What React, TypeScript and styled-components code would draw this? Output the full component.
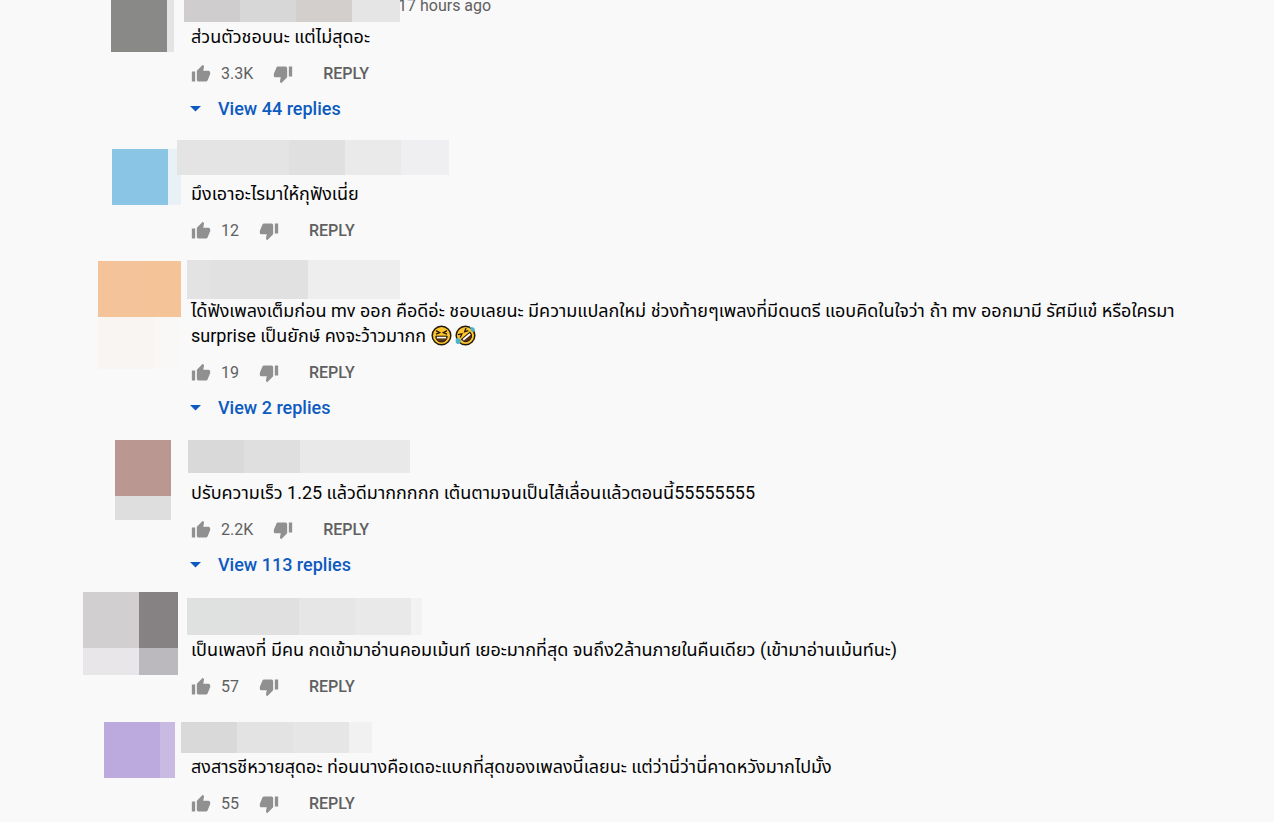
import React from "react";
import styled, { createGlobalStyle } from "styled-components";

const GlobalStyle = createGlobalStyle`
  * { box-sizing: border-box; }
  body {
    margin: 0;
    background: #f9f9f9;
    color: #030303;
    font-family: Roboto, "Leelawadee UI", "Noto Sans Thai", "Noto Sans", sans-serif;
  }
`;

const Viewport = styled.main`
  overflow: hidden;
  height: 100vh;
`;

/* The list is scrolled a little, so the first comment is cut at the top. */
const CommentList = styled.ul`
  margin: -22px 0 0;
  padding: 0;
  list-style: none;
`;

const Comment = styled.li`
  display: grid;
  grid-template-columns: 191px minmax(0, 1fr);
  align-items: start;
  padding-bottom: 9px;
`;

const AvatarCell = styled.div<{ $left: number; $top: number }>`
  height: 0;
  padding-left: ${(p) => p.$left}px;
  padding-top: ${(p) => p.$top}px;
`;

const Mosaic = styled.div<{ $cols: number[]; $rows: number[] }>`
  display: grid;
  grid-template-columns: ${(p) => p.$cols.map((c) => `${c}px`).join(" ")};
  grid-template-rows: ${(p) => p.$rows.map((r) => `${r}px`).join(" ")};
`;

const Tile = styled.span<{ $color: string }>`
  background: ${(p) => p.$color};
`;

const Body = styled.div`
  min-width: 0;
  padding-right: 60px;
`;

const Header = styled.div<{ $shift: number; $top: number }>`
  display: flex;
  align-items: flex-start;
  height: 46px;
  margin-left: -${(p) => p.$shift}px;
  padding-top: ${(p) => p.$top}px;
`;

const NameCover = styled.div`
  position: relative;
  z-index: 1;
`;

const Time = styled.a`
  margin: 18px 0 0 -2px;
  color: #606060;
  font-size: 16px;
  line-height: 20px;
  text-decoration: none;
`;

const Text = styled.p`
  margin: 0;
  font-size: 18px;
  line-height: 25px;
  white-space: pre-line;
`;

const Actions = styled.div`
  display: flex;
  align-items: center;
  height: 24px;
  margin-top: 13px;
  color: #606060;
  font-size: 16px;
  line-height: 24px;
`;

const IconButton = styled.button`
  display: flex;
  padding: 0;
  border: 0;
  background: none;
  color: #909090;
  cursor: pointer;
`;

const Count = styled.span`
  margin: 0 20px 0 10px;
`;

const ReplyButton = styled.button`
  margin-left: 30px;
  padding: 0;
  border: 0;
  background: none;
  color: #606060;
  font: 500 16px/24px Roboto, sans-serif;
  cursor: pointer;
`;

const RepliesButton = styled.button`
  display: flex;
  align-items: center;
  gap: 16px;
  height: 24px;
  margin: 11px 0 5px -1px;
  padding: 0;
  border: 0;
  background: none;
  color: #0d5bc0;
  font: 500 18px/24px Roboto, sans-serif;
  cursor: pointer;
`;

const EmojiSvg = styled.svg`
  width: 21px;
  height: 21px;
  margin-right: 3px;
  vertical-align: -4px;
`;

const ThumbUp = () => (
  <svg width="20" height="20" viewBox="0 0 24 24" fill="currentColor" aria-hidden="true">
    <path d="M1 21h4V9H1v12zm22-11c0-1.1-.9-2-2-2h-6.31l.95-4.57.03-.32c0-.41-.17-.79-.44-1.06L14.17 1 7.59 7.59C7.22 7.95 7 8.45 7 9v10c0 1.1.9 2 2 2h9c.83 0 1.54-.5 1.84-1.22l3.02-7.05c.09-.23.14-.47.14-.73v-2z" />
  </svg>
);

const ThumbDown = () => (
  <svg width="20" height="20" viewBox="0 0 24 24" fill="currentColor" aria-hidden="true">
    <path d="M15 3H6c-.83 0-1.54.5-1.84 1.22l-3.02 7.05c-.09.23-.14.47-.14.73v2c0 1.1.9 2 2 2h6.31l-.95 4.57-.03.32c0 .41.17.79.44 1.06L9.83 23l6.59-6.59c.36-.36.58-.86.58-1.41V5c0-1.1-.9-2-2-2zm4 0v12h4V3h-4z" />
  </svg>
);

const Caret = () => (
  <svg width="12" height="6" viewBox="0 0 12 6" fill="currentColor" aria-hidden="true">
    <path d="M0 0h11L5.500 5.500z" />
  </svg>
);

const Laughing = () => (
  <EmojiSvg viewBox="0 0 21 21" role="img" aria-label="laughing">
    <circle cx="10.5" cy="10.5" r="9.3" fill="#fdc62f" stroke="#24190c" strokeWidth="1.5" />
    <path d="M5 5.6l3.7 2L5 9.2M16 5.6l-3.7 2L16 9.2" fill="none" stroke="#24190c" strokeWidth="1.3" />
    <path d="M4.8 11.2h11.4c0 3.6-2.4 5.8-5.7 5.8s-5.7-2.2-5.7-5.8z" fill="#5a3216" stroke="#24190c" strokeWidth="1" />
    <path d="M5.9 11.8h9.2v1.6H5.9z" fill="#fff" />
  </EmojiSvg>
);

const Rolling = () => (
  <EmojiSvg viewBox="0 0 21 21" role="img" aria-label="rolling on the floor laughing">
    <circle cx="10.5" cy="10.5" r="9.3" fill="#fdc62f" stroke="#24190c" strokeWidth="1.5" />
    <g transform="rotate(-40 10.5 10.5)">
      <path d="M5.2 5l3.5 2-3.5 1.6M15.8 5l-3.5 2 3.5 1.6" fill="none" stroke="#24190c" strokeWidth="1.3" />
      <path d="M5 10.8h11c0 3.6-2.2 5.8-5.5 5.8S5 14.4 5 10.8z" fill="#5a3216" stroke="#24190c" strokeWidth="1" />
      <path d="M6 11.4h9v1.8H6z" fill="#fff" />
    </g>
    <path d="M1 13.5c2.8-.6 4.6.2 4.8 2.2.2 2.2-1.6 3.6-3.3 3.2C.6 18.4.2 16 1 13.5zM14.5 2c2.600-.4 4.800.4 5.300 2 .5 1.800-.6 3-2.100 2.800-1.900-.2-1.600-3.200-3.200-4.800z" fill="#4fb3c8" />
  </EmojiSvg>
);

interface Cover {
  offset: number;
  top: number;
  cols: number[];
  rows: number[];
  colors: string[];
}

interface CommentData {
  avatar: Cover;
  name: Cover;
  time?: string;
  text: React.ReactNode;
  likes: string;
  replies?: number;
}

const comments: CommentData[] = [
  {
    avatar: { offset: 111, top: 0, cols: [56, 7], rows: [74], colors: ["#898987", "#e4e4e4"] },
    name: { offset: 7, top: 0, cols: [56, 56, 56, 48], rows: [44], colors: ["#d0cdce", "#d7d7d7", "#d2cfcd", "#e5e5e5"] },
    time: "17 hours ago",
    text: "ส่วนตัวชอบนะ แต่ไม่สุดอะ",
    likes: "3.3K",
    replies: 44,
  },
  {
    avatar: { offset: 112, top: 14, cols: [56, 13], rows: [56], colors: ["#8ac5e6", "#e8f1f6"] },
    name: { offset: 14, top: 5, cols: [112, 56, 56, 48], rows: [35], colors: ["#e4e4e4", "#e0e0e0", "#eaeaea", "#efeff1"] },
    text: "มึงเอาอะไรมาให้กุฟังเนี่ย",
    likes: "12",
  },
  {
    avatar: {
      offset: 98,
      top: 9,
      cols: [56, 27],
      rows: [56, 52],
      colors: ["#f5c399", "#f5c398", "#f9f5f2", "#f9f8f7"],
    },
    name: { offset: 4, top: 8, cols: [23, 98, 92], rows: [39], colors: ["#e3e3e3", "#e1e1e1", "#eeeeee"] },
    text: (
      <>
        {"ได้ฟังเพลงเต็มก่อน mv ออก คือดีอ่ะ ชอบเลยนะ มีความแปลกใหม่ ช่วงท้ายๆเพลงที่มีดนตรี แอบคิดในใจว่า ถ้า mv ออกมามี รัศมีแข๋ หรือใครมา\nsurprise เป็นยักษ์ คงจะว้าวมากก "}
        <Laughing />
        <Rolling />
      </>
    ),
    likes: "19",
    replies: 2,
  },
  {
    avatar: { offset: 115, top: 6, cols: [56], rows: [56, 24], colors: ["#ba9791", "#dedede"] },
    name: { offset: 3, top: 6, cols: [56, 56, 110], rows: [33], colors: ["#d9d9d9", "#dfdfdf", "#e9e9e9"] },
    text: "ปรับความเร็ว 1.25 แล้วดีมากกกกก เต้นตามจนเป็นไส้เลื่อนแล้วตอนนี้55555555",
    likes: "2.2K",
    replies: 113,
  },
  {
    avatar: {
      offset: 83,
      top: 1,
      cols: [56, 39],
      rows: [56, 27],
      colors: ["#d1cfd0", "#868182", "#e8e6e8", "#bbb9bd"],
    },
    name: {
      offset: 4,
      top: 7,
      cols: [56, 56, 56, 56, 11],
      rows: [37],
      colors: ["#dfe0e0", "#e0e0e0", "#e6e6e6", "#e9e9e9", "#f2f2f2"],
    },
    text: "เป็นเพลงที่ มีคน กดเข้ามาอ่านคอมเม้นท์ เยอะมากที่สุด จนถึง2ล้านภายในคืนเดียว (เข้ามาอ่านเม้นท์นะ)",
    likes: "57",
  },
  {
    avatar: { offset: 104, top: 14, cols: [56, 15], rows: [56], colors: ["#bca9de", "#c8bae3"] },
    name: { offset: 10, top: 14, cols: [56, 56, 56, 23], rows: [31], colors: ["#d9d9d9", "#e3e3e3", "#e6e6e6", "#f1f1f1"] },
    text: "สงสารชีหวายสุดอะ ท่อนนางคือเดอะแบกที่สุดของเพลงนี้เลยนะ แต่ว่านี่ว่านี่คาดหวังมากไปมั้ง",
    likes: "55",
  },
];

const Pixelated = ({ cover }: { cover: Cover }) => (
  <Mosaic $cols={cover.cols} $rows={cover.rows} aria-hidden="true">
    {cover.colors.map((color, i) => (
      <Tile key={i} $color={color} />
    ))}
  </Mosaic>
);

export default function App() {
  return (
    <>
      <GlobalStyle />
      <Viewport>
        <CommentList>
          {comments.map((c, i) => (
            <Comment key={i}>
              <AvatarCell $left={c.avatar.offset} $top={c.avatar.top}>
                <Pixelated cover={c.avatar} />
              </AvatarCell>
              <Body>
                <Header $shift={c.name.offset} $top={c.name.top}>
                  <NameCover>
                    <Pixelated cover={c.name} />
                  </NameCover>
                  {c.time && <Time href="#comment">{c.time}</Time>}
                </Header>
                <Text lang="th">{c.text}</Text>
                <Actions>
                  <IconButton type="button" aria-label="Like">
                    <ThumbUp />
                  </IconButton>
                  <Count>{c.likes}</Count>
                  <IconButton type="button" aria-label="Dislike">
                    <ThumbDown />
                  </IconButton>
                  <ReplyButton type="button">REPLY</ReplyButton>
                </Actions>
                {c.replies && (
                  <RepliesButton type="button">
                    <Caret />
                    <span>View {c.replies} replies</span>
                  </RepliesButton>
                )}
              </Body>
            </Comment>
          ))}
        </CommentList>
      </Viewport>
    </>
  );
}
